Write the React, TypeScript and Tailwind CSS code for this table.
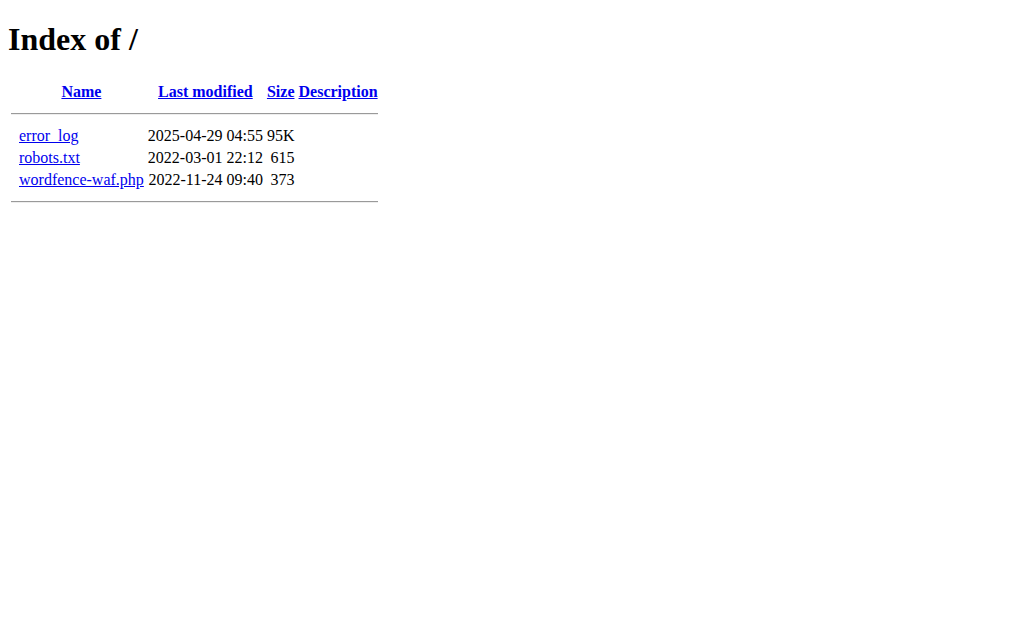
export default function App() {
  const rows = [
    { name: "error_log", date: "2025-04-29 04:55", size: "95K" },
    { name: "robots.txt", date: "2022-03-01 22:12", size: "615" },
    { name: "wordfence-waf.php", date: "2022-11-24 09:40", size: "373" },
  ];
  const link = "text-[#0000EE] underline";
  return (
    <div className="min-h-[629px] bg-white text-black px-2 pb-2 pt-[21px] font-['Liberation_Serif',serif] text-[16px] leading-[normal]">
      <h1 className="text-[32px] font-bold leading-[normal] mb-[22px]">Index of /</h1>
      <table className="border-separate border-spacing-[2px]">
        <tbody>
          <tr>
            <th className="p-[1px] align-top font-bold text-center">
              <span className="inline-block w-[4px]" />
            </th>
            <th className="p-[1px] font-bold text-center"><a className={link}>Name</a></th>
            <th className="p-[1px] font-bold text-center"><a className={link}>Last modified</a></th>
            <th className="p-[1px] font-bold text-center"><a className={link}>Size</a></th>
            <th className="p-[1px] font-bold text-center"><a className={link}>Description</a></th>
          </tr>
          <tr>
            <th colSpan={5} className="p-[1px]">
              <hr className="my-2 h-0 border-0 border-t border-b border-t-[#9a9a9a] border-b-[#eeeeee]" />
            </th>
          </tr>
          {rows.map((r) => (
            <tr key={r.name}>
              <td className="p-[1px] align-top">
                <span className="inline-block w-[4px]" />
              </td>
              <td className="p-[1px]"><a className={link}>{r.name}</a></td>
              <td className="p-[1px] text-right">{r.date} </td>
              <td className="p-[1px] text-right">{r.size}</td>
              <td className="p-[1px]">&nbsp;</td>
            </tr>
          ))}
          <tr>
            <th colSpan={5} className="p-[1px]">
              <hr className="my-2 h-0 border-0 border-t border-b border-t-[#9a9a9a] border-b-[#eeeeee]" />
            </th>
          </tr>
        </tbody>
      </table>
    </div>
  );
}
